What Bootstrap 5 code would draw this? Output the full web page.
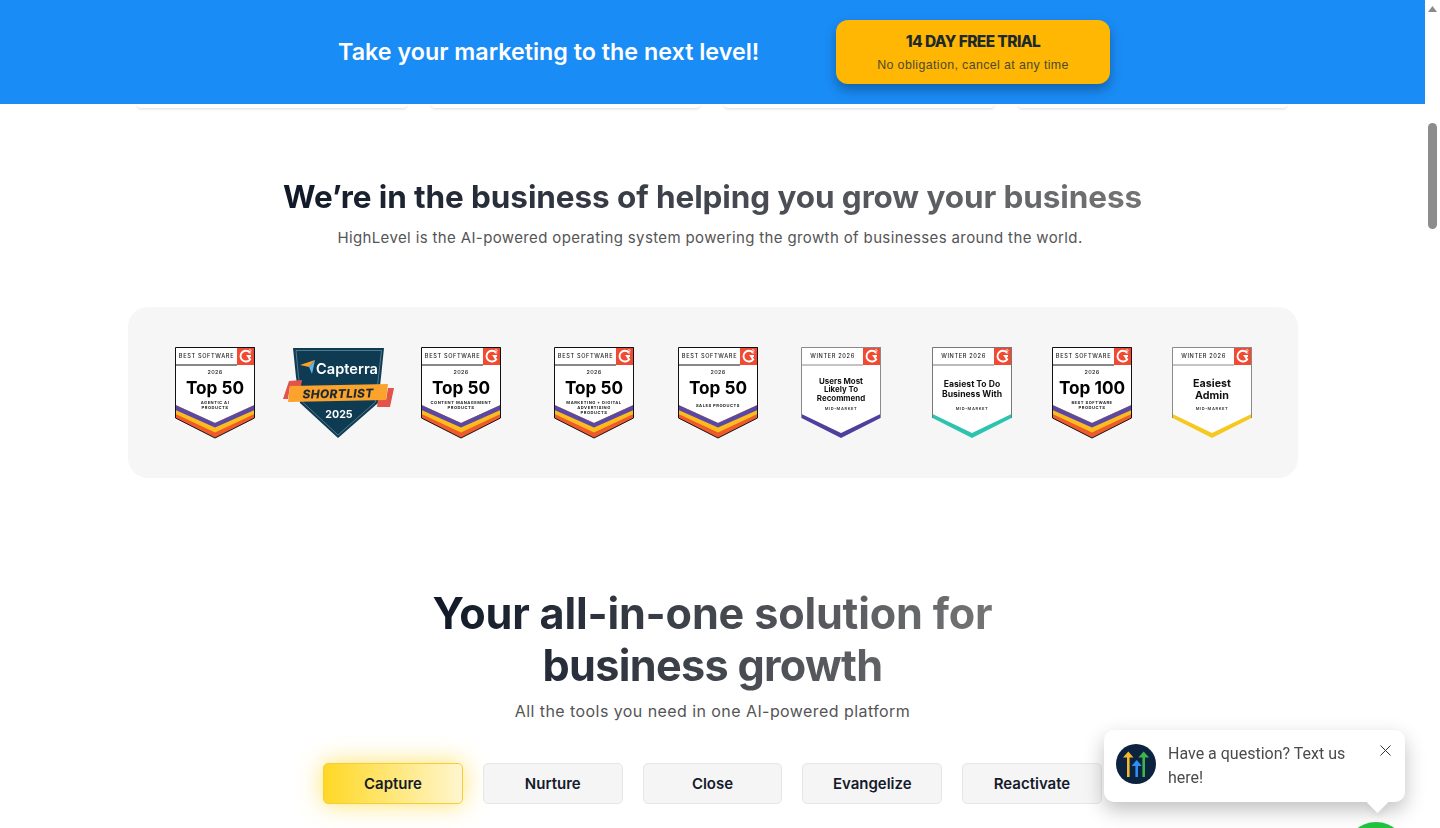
<!DOCTYPE html>
<html>
<head>
<title>HighLevel</title>
<link href="https://cdn.jsdelivr.net/npm/bootstrap@5.3.0/dist/css/bootstrap.min.css" rel="stylesheet">
<script src="https://cdn.jsdelivr.net/npm/bootstrap@5.3.0/dist/js/bootstrap.bundle.min.js"></script>
<style>
html, body { height: 828px; overflow: hidden; }
body { font-family: Inter, "Liberation Sans", sans-serif; background: #fff; }
.page-main { width: 1425px; height: 828px; overflow: hidden; }

/* scrollbar column */
.fake-scroll { width: 15px; height: 828px; background: #fff; }
.fake-scroll svg { display: block; margin: 6px 0 0 3px; }
.scroll-thumb { width: 9px; height: 106px; margin: 111px 0 0 3px; background: #8c8c8c; border-radius: 5px; }

/* top banner */
.promo-bar { height: 104px; padding-left: 23px; background: #1a8cf6; position: relative; z-index: 2; }
.promo-title { width: 421px; margin: 0 77px 0 0; font-size: 23.3px; font-weight: 600; color: #fff; white-space: nowrap; }
.promo-btn { width: 274px; height: 64px; padding: 0; background: #ffb703; border: 0; border-radius: 12px; box-shadow: 0 6px 12px rgba(0,0,0,.3); }
.promo-btn:hover { background: #ffb703; }
.promo-btn b { display: block; font-size: 15.5px; font-weight: 800; letter-spacing: -.6px; color: #1d2a2b; line-height: 20px; margin-top: 2px; }
.promo-btn span { display: block; font-family: "Liberation Sans", sans-serif; font-size: 12.4px; letter-spacing: .38px; color: #4c4a2c; line-height: 18px; margin-top: 4px; }

/* cards scrolled under the banner */
.peek-row { width: 1150px; height: 4px; margin-left: 137px; gap: 24px; }
.peek-card { flex: 1; height: 4px; border: 0; background: #fff; border-radius: 0 0 16px 16px; box-shadow: 0 1px 3px rgba(0,0,0,.14); }

/* headings */
.grad-head { display: inline-block; margin: 0; font-weight: 700; background: linear-gradient(90deg, #101827 0%, #747474 100%); -webkit-background-clip: text; background-clip: text; color: transparent; }
.head-one { font-size: 31.5px; line-height: 44px; letter-spacing: -.1px; margin-top: 67px; }
.sub-one { font-size: 15px; line-height: 24px; letter-spacing: .37px; color: #555; margin: 7px 0 0; padding-right: 5px; }
.head-two { font-size: 43.2px; line-height: 52px; margin-top: 109px; letter-spacing: -.2px; }
.head-tight { letter-spacing: -.7px; }
.sub-two { font-size: 16px; line-height: 24px; letter-spacing: .43px; color: #555; margin: 8px 0 0; }

/* awards */
.award-panel { width: 1170px; height: 171px; margin: 57px 0 0 128px; padding: 40px 0 0 47px; background: #f6f6f6; border-radius: 20px; }
.award-panel svg { flex: none; filter: blur(.3px); overflow: visible; }
.award-panel svg text { font-family: Inter, "Liberation Sans", sans-serif; text-anchor: middle; }
.award-panel .gap-a { margin-left: 28px; }
.award-panel .gap-b { margin-left: 26px; }
.award-panel .gap-c { margin-left: 53px; }
.award-panel .gap-d { margin-left: 44px; }
.award-panel .gap-e { margin-left: 43px; }
.award-panel .gap-f { margin-left: 51px; }
.award-panel .gap-g { margin-left: 40px; }
.t-head { font-size: 5.6px; font-weight: 500; letter-spacing: .65px; fill: #222; }
.t-year { font-size: 5.4px; font-weight: 500; letter-spacing: .4px; fill: #222; }
.t-top { font-size: 17.2px; font-weight: 700; fill: #000; }
.t-small { font-size: 4.1px; font-weight: 700; letter-spacing: .5px; fill: #222; }
.t-mid { font-size: 4px; font-weight: 600; letter-spacing: .6px; fill: #333; }

/* tabs */
.tab-row { gap: 20px; margin-top: 40px; }
.tab-btn { width: 139.75px; height: 41px; padding: 1px 0 0; font-size: 15px; font-weight: 600; color: #151b2b; background: #f5f5f5; border: 1px solid #e6e6e6; border-radius: 5px; }
.tab-btn:hover { background: #f5f5f5; border-color: #e6e6e6; color: #151b2b; }
.tab-on, .tab-on:hover { background: linear-gradient(90deg, #ffd825 0%, #fff6ce 100%); border-color: #f2cd3c; box-shadow: 0 0 24px rgba(255,214,40,.7); }

/* chat widget */
.chat-pop { position: fixed; left: 1104px; top: 730px; width: 301px; height: 72px; padding: 14px 12px; background: #fff; border-radius: 10px; box-shadow: 0 8px 20px rgba(0,0,0,.25); z-index: 5; font-family: Roboto, sans-serif; font-size: 16px; line-height: 24px; color: #4b4b4b; }
.chat-copy { width: 190px; margin: -2px 0 0 12px; }
.chat-close { position: absolute; left: 276px; top: 15px; display: block; }
.chat-tip { position: fixed; left: 1370px; top: 795px; width: 15px; height: 15px; background: #fff; transform: rotate(45deg); z-index: 5; box-shadow: 4px 4px 8px rgba(0,0,0,.06); }
.chat-fab { position: fixed; left: 1344px; top: 822px; width: 64px; height: 64px; background: #22c43f; border-radius: 50%; z-index: 4; }
</style>
</head>
<body>
<svg width="0" height="0" class="position-absolute">
  <defs>
    <symbol id="g2-mark" viewBox="0 0 18 18">
      <rect width="18" height="18" fill="#ef4a32"/>
      <path d="M12.6 5.2A5.4 5.4 0 1 0 13.2 12.4L10.9 9H14" fill="none" stroke="#fff" stroke-width="1.9"/>
      <path d="M11.6 3.7c.2-1.5 2.8-1.3 2.6.1-.1.8-1.7 1.2-2.3 2.2h2.4" fill="none" stroke="#fff" stroke-width=".8"/>
    </symbol>
    <symbol id="stripes-full" viewBox="0 0 80 92">
      <path d="M.5 58 40 76 79.5 58V71L40 91 .5 71Z" fill="#ee5a2a"/>
      <path d="M.5 58 40 76 79.5 58V67L40 85.5 .5 67Z" fill="#fdbb1e"/>
      <path d="M.5 58 40 76 79.5 58V63L40 80.5 .5 63Z" fill="#5a48a6"/>
    </symbol>
  </defs>
</svg>

<div class="d-flex">
  <div class="page-main">
    <div class="promo-bar d-flex align-items-center justify-content-center">
      <h2 class="promo-title text-center">Take your marketing to the next level!</h2>
      <button class="btn promo-btn" type="button"><b>14 DAY FREE TRIAL</b><span>No obligation, cancel at any time</span></button>
    </div>

    <div class="peek-row d-flex">
      <div class="card peek-card"></div>
      <div class="card peek-card"></div>
      <div class="card peek-card"></div>
      <div class="card peek-card"></div>
    </div>

    <div class="text-center">
      <h2 class="grad-head head-one">We’re in the business of helping you grow your business</h2>
      <p class="sub-one">HighLevel is the AI-powered operating system powering the growth of businesses around the world.</p>
    </div>

    <div class="award-panel d-flex align-items-start">
      <svg width="80" height="92" viewBox="0 0 80 92">
        <path d="M.5.5H79.5V71L40 91 .5 71Z" fill="#fff"/>
        <use href="#stripes-full" width="80" height="92"/>
        <use href="#g2-mark" x="62" y="0" width="18" height="18"/>
        <path d="M.5.5H79.5V71L40 91 .5 71ZM.5 18H62" fill="none" stroke="#111"/>
        <text class="t-head" x="31.5" y="11">BEST SOFTWARE</text>
        <text class="t-year" x="40" y="27">2026</text>
        <text class="t-top" x="40" y="46.5">Top 50</text>
        <text class="t-small" x="40" y="57">AGENTIC AI</text>
        <text class="t-small" x="40" y="62">PRODUCTS</text>
      </svg>

      <svg class="gap-a" width="112" height="93" viewBox="0 0 112 93">
        <path d="M10 1H101L98 30 95 56 55 91 17 56 13 30Z" fill="#0e3a52"/>
        <path d="M13 3.5H98.5L95.5 30 92.5 55 55 88 19.5 55 15.5 30Z" fill="none" stroke="#7fa3b5" stroke-width=".6"/>
        <path d="M17 18 32 13 26 20Z" fill="#ff9d28"/>
        <path d="M32 13 29 27 26 20Z" fill="#5bb7e8"/>
        <text x="64" y="27" font-size="14.6" font-weight="600" fill="#fff">Capterra</text>
        <path d="M6 34 19 33 18 39 7 39 5 52 0 52Z" fill="#e2534a"/>
        <path d="M105 41H111L107 60H94L95 53 103 53Z" fill="#e2534a"/>
        <path d="M7 39 105 37 103 53 5 55Z" fill="#fba32c"/>
        <text x="55" y="51" font-size="12" font-weight="800" font-style="italic" fill="#1c2b33" transform="rotate(-1 55 47)" style="letter-spacing:.3px">SHORTLIST</text>
        <text x="56" y="71" font-size="10.6" font-weight="700" fill="#fff">2025</text>
      </svg>

      <svg class="gap-b" width="80" height="92" viewBox="0 0 80 92">
        <path d="M.5.5H79.5V71L40 91 .5 71Z" fill="#fff"/>
        <use href="#stripes-full" width="80" height="92"/>
        <use href="#g2-mark" x="62" y="0" width="18" height="18"/>
        <path d="M.5.5H79.5V71L40 91 .5 71ZM.5 18H62" fill="none" stroke="#111"/>
        <text class="t-head" x="31.5" y="11">BEST SOFTWARE</text>
        <text class="t-year" x="40" y="27">2026</text>
        <text class="t-top" x="40" y="46.5">Top 50</text>
        <text class="t-small" x="40" y="57">CONTENT MANAGEMENT</text>
        <text class="t-small" x="40" y="62">PRODUCTS</text>
      </svg>

      <svg class="gap-c" width="80" height="92" viewBox="0 0 80 92">
        <path d="M.5.5H79.5V71L40 91 .5 71Z" fill="#fff"/>
        <use href="#stripes-full" width="80" height="92"/>
        <use href="#g2-mark" x="62" y="0" width="18" height="18"/>
        <path d="M.5.5H79.5V71L40 91 .5 71ZM.5 18H62" fill="none" stroke="#111"/>
        <text class="t-head" x="31.5" y="11">BEST SOFTWARE</text>
        <text class="t-year" x="40" y="27">2026</text>
        <text class="t-top" x="40" y="46.5">Top 50</text>
        <text class="t-small" x="40" y="57">MARKETING + DIGITAL</text>
        <text class="t-small" x="40" y="62">ADVERTISING</text>
        <text class="t-small" x="40" y="67">PRODUCTS</text>
      </svg>

      <svg class="gap-d" width="80" height="92" viewBox="0 0 80 92">
        <path d="M.5.5H79.5V71L40 91 .5 71Z" fill="#fff"/>
        <use href="#stripes-full" width="80" height="92"/>
        <use href="#g2-mark" x="62" y="0" width="18" height="18"/>
        <path d="M.5.5H79.5V71L40 91 .5 71ZM.5 18H62" fill="none" stroke="#111"/>
        <text class="t-head" x="31.5" y="11">BEST SOFTWARE</text>
        <text class="t-year" x="40" y="27">2026</text>
        <text class="t-top" x="40" y="46.5">Top 50</text>
        <text class="t-small" x="40" y="59.5">SALES PRODUCTS</text>
      </svg>

      <svg class="gap-e" width="80" height="92" viewBox="0 0 80 92">
        <path d="M.5.5H79.5V71L40 91 .5 71Z" fill="#fff"/>
        <path d="M.5 67 40 86 79.5 67V71L40 91 .5 71Z" fill="#4f3f9d"/>
        <use href="#g2-mark" x="62" y="0" width="18" height="18"/>
        <path d="M.5 71V.5H79.5V71M.5 18H62" fill="none" stroke="#8a8a8a"/>
        <text class="t-head" x="31.5" y="11">WINTER 2026</text>
        <text x="40" y="36.5" font-size="7.9" font-weight="700" fill="#111">Users Most</text>
        <text x="40" y="45" font-size="7.9" font-weight="700" fill="#111">Likely To</text>
        <text x="40" y="54" font-size="7.9" font-weight="700" fill="#111">Recommend</text>
        <text class="t-mid" x="40" y="62.5">MID-MARKET</text>
      </svg>

      <svg class="gap-f" width="80" height="92" viewBox="0 0 80 92">
        <path d="M.5.5H79.5V71L40 91 .5 71Z" fill="#fff"/>
        <path d="M.5 67 40 86 79.5 67V71L40 91 .5 71Z" fill="#2cc4ae"/>
        <use href="#g2-mark" x="62" y="0" width="18" height="18"/>
        <path d="M.5 71V.5H79.5V71M.5 18H62" fill="none" stroke="#777"/>
        <text class="t-head" x="31.5" y="11">WINTER 2026</text>
        <text x="40" y="40" font-size="8.6" font-weight="700" fill="#111">Easiest To Do</text>
        <text x="40" y="49.5" font-size="8.6" font-weight="700" fill="#111">Business With</text>
        <text class="t-mid" x="40" y="62.5">MID-MARKET</text>
      </svg>

      <svg class="gap-g" width="80" height="92" viewBox="0 0 80 92">
        <path d="M.5.5H79.5V71L40 91 .5 71Z" fill="#fff"/>
        <use href="#stripes-full" width="80" height="92"/>
        <use href="#g2-mark" x="62" y="0" width="18" height="18"/>
        <path d="M.5.5H79.5V71L40 91 .5 71ZM.5 18H62" fill="none" stroke="#111"/>
        <text class="t-head" x="31.5" y="11">BEST SOFTWARE</text>
        <text class="t-year" x="40" y="27">2026</text>
        <text class="t-top" x="40" y="46.5">Top 100</text>
        <text class="t-small" x="40" y="57">BEST SOFTWARE</text>
        <text class="t-small" x="40" y="62">PRODUCTS</text>
      </svg>

      <svg class="gap-g" width="80" height="92" viewBox="0 0 80 92">
        <path d="M.5.5H79.5V71L40 91 .5 71Z" fill="#fff"/>
        <path d="M.5 67 40 86 79.5 67V71L40 91 .5 71Z" fill="#f6c922"/>
        <use href="#g2-mark" x="62" y="0" width="18" height="18"/>
        <path d="M.5 71V.5H79.5V71M.5 18H62" fill="none" stroke="#8a8a8a"/>
        <text class="t-head" x="31.5" y="11">WINTER 2026</text>
        <text x="40" y="39.5" font-size="10.7" font-weight="700" fill="#111">Easiest</text>
        <text x="40" y="51.5" font-size="10.7" font-weight="700" fill="#111">Admin</text>
        <text class="t-mid" x="40" y="62.5">MID-MARKET</text>
      </svg>
    </div>

    <div class="text-center">
      <h2 class="grad-head head-two">Your all-in-one solution for<br><span class="head-tight">business growth</span></h2>
      <p class="sub-two">All the tools you need in one AI-powered platform</p>
    </div>

    <div class="tab-row d-flex justify-content-center">
      <button class="btn tab-btn tab-on" type="button">Capture</button>
      <button class="btn tab-btn" type="button">Nurture</button>
      <button class="btn tab-btn" type="button">Close</button>
      <button class="btn tab-btn" type="button">Evangelize</button>
      <button class="btn tab-btn" type="button">Reactivate</button>
    </div>
  </div>

  <div class="fake-scroll">
    <svg width="9" height="6" viewBox="0 0 9 6"><path d="M4.5 0 9 6H0Z" fill="#8a8a8a"/></svg>
    <div class="scroll-thumb"></div>
  </div>
</div>

<div class="chat-pop d-flex">
  <svg width="40" height="40" viewBox="0 0 40 40" class="flex-shrink-0">
    <circle cx="20" cy="20" r="20" fill="#0c2340"/>
    <path d="M12.3 33V12" stroke="#f6b92b" stroke-width="2.6"/><path d="M12.3 7.5 17.5 13.5H7Z" fill="#f6b92b"/>
    <path d="M20.7 33V20" stroke="#2f8fef" stroke-width="2.6"/><path d="M20.7 16 25.8 22H15.6Z" fill="#2f8fef"/>
    <path d="M27.7 33V12" stroke="#3fb549" stroke-width="2.6"/><path d="M27.7 7.5 33 13.5H22.4Z" fill="#3fb549"/>
  </svg>
  <div class="chat-copy">Have a question? Text us here!</div>
  <svg class="chat-close" width="11" height="11" viewBox="0 0 11 11"><path d="M.5.5 10.5 10.5M10.5.5 .5 10.5" stroke="#333" stroke-width="1"/></svg>
</div>
<div class="chat-tip"></div>
<div class="chat-fab"></div>
</body>
</html>
